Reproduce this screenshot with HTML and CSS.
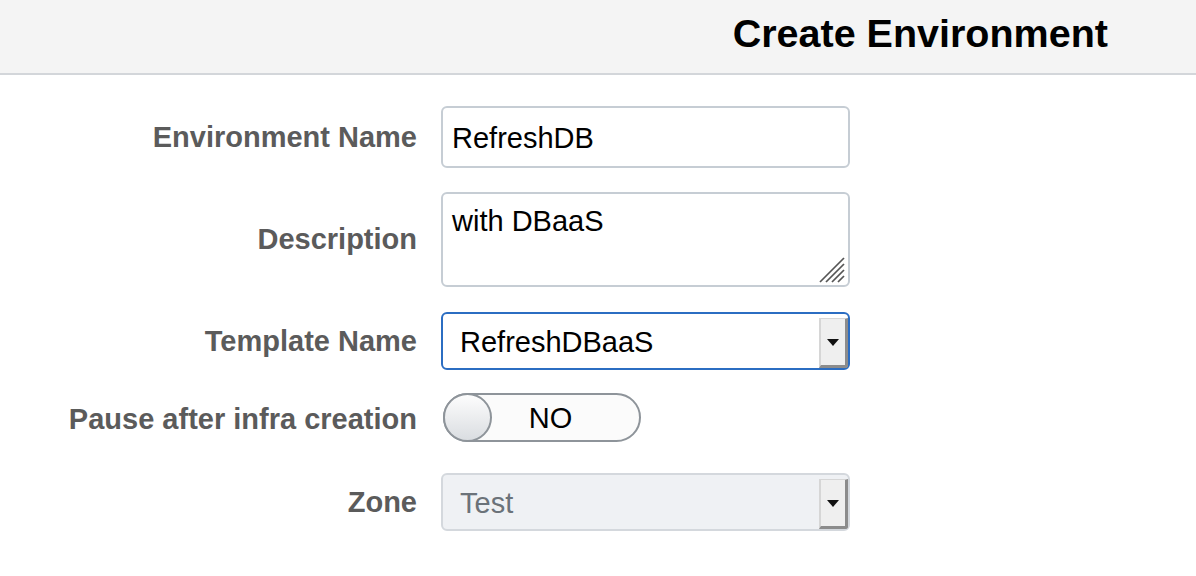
FILE: index.html
```html
<!DOCTYPE html>
<html lang="en">
<head>
<meta charset="utf-8">
<title>Create Environment</title>
<link rel="stylesheet" href="styles.css">
</head>
<body>
<header class="header">
  <h1 class="title">Create Environment</h1>
</header>
<main class="form">
  <div class="row row-name">
    <label class="label" for="envname">Environment Name</label>
    <input class="field" id="envname" type="text" value="RefreshDB">
  </div>
  <div class="row row-desc">
    <label class="label" for="desc">Description</label>
    <div class="area-wrap">
      <textarea class="field area" id="desc">with DBaaS</textarea>
      <svg class="grip" width="26" height="26" viewBox="0 0 26 26" aria-hidden="true">
        <g stroke="#555" stroke-width="1.7" stroke-linecap="butt">
          <line x1="1" y1="25" x2="25" y2="1"/>
          <line x1="7" y1="25" x2="25" y2="7"/>
          <line x1="13" y1="25" x2="25" y2="13"/>
          <line x1="19" y1="25" x2="25" y2="19"/>
        </g>
      </svg>
    </div>
  </div>
  <div class="row row-template">
    <span class="label">Template Name</span>
    <div class="select select-active">
      <span class="select-text">RefreshDBaaS</span>
      <span class="select-btn"><span class="arrow"></span></span>
    </div>
  </div>
  <div class="row row-pause">
    <span class="label">Pause after infra creation</span>
    <div class="toggle">
      <span class="knob"></span>
      <span class="toggle-text">NO</span>
    </div>
  </div>
  <div class="row row-zone">
    <span class="label">Zone</span>
    <div class="select select-disabled">
      <span class="select-text">Test</span>
      <span class="select-btn"><span class="arrow"></span></span>
    </div>
  </div>
</main>
</body>
</html>
```

FILE: styles.css
```css
* { box-sizing: border-box; }

body {
  margin: 0;
  background: #ffffff;
  font-family: "Liberation Sans", Arial, Helvetica, sans-serif;
  color: #000;
}

.header {
  height: 75px;
  background: #f4f4f4;
  border-bottom: 2px solid #d3d6da;
  display: flex;
  justify-content: flex-end;
  padding: 11px 88px 0 0;
}

.title {
  margin: 0;
  font-size: 39.5px;
  font-weight: bold;
  line-height: 45px;
  color: #000;
}

.form {
  padding-top: 31px;
}

.row {
  display: flex;
  align-items: center;
  gap: 24px;
  margin-bottom: 24px;
}
.row-desc { margin-bottom: 25px; }
.row-template { margin-bottom: 23px; }
.row-pause { margin-bottom: 31px; }

.label {
  width: 417px;
  flex: none;
  text-align: right;
  font-size: 29px;
  font-weight: bold;
  color: #5b5b5b;
}

.row-pause .label {
  padding-top: 4px;
}

.field {
  width: 409px;
  height: 62px;
  border: 2px solid #c6cdd4;
  border-radius: 6px;
  padding: 2px 9px 0;
  font-family: "Liberation Sans", Arial, Helvetica, sans-serif;
  font-size: 29px;
  color: #000;
  background: #fff;
  outline: none;
}

.area-wrap {
  position: relative;
  width: 409px;
  height: 95px;
}

.area {
  display: block;
  height: 95px;
  padding-top: 11px;
  resize: none;
  overflow: hidden;
  line-height: 33px;
}

.grip {
  position: absolute;
  right: 5px;
  bottom: 4px;
}

.select {
  width: 409px;
  height: 58px;
  border: 2px solid #c6cdd4;
  border-radius: 6px;
  display: flex;
  align-items: stretch;
  font-size: 29px;
  background: #fff;
}

.select-active {
  border-color: #2b6dc2;
}

.select-disabled {
  background: #eff1f4;
  border-color: #d4d8dd;
  color: #6b7279;
}

.select-text {
  flex: 1;
  display: flex;
  align-items: center;
  padding: 2px 0 0 17px;
}

.select-btn {
  width: 29px;
  margin-top: 4px;
  background: #efefef;
  border-left: 2px solid #d6d6d6;
  border-top: 1px solid #d6d6d6;
  border-right: 3px solid #8c8c8c;
  border-bottom: 3px solid #8c8c8c;
  border-bottom-right-radius: 3px;
  display: flex;
  align-items: center;
  justify-content: center;
}

.arrow {
  width: 0;
  height: 0;
  border-left: 6px solid transparent;
  border-right: 6px solid transparent;
  border-top: 7px solid #111;
}

.toggle {
  width: 198px;
  height: 49px;
  margin-left: 2px;
  border: 2px solid #8e949a;
  border-radius: 25px;
  background: #fbfbfb;
  display: flex;
  align-items: center;
}

.knob {
  flex: none;
  width: 49px;
  height: 49px;
  margin: -2px;
  border: 2px solid #8e949a;
  border-radius: 50%;
  background: linear-gradient(#fdfdfd, #dadde1);
}

.toggle-text {
  flex: 1;
  text-align: center;
  padding-right: 28px;
  padding-top: 2px;
  font-size: 29px;
  color: #000;
}
```
